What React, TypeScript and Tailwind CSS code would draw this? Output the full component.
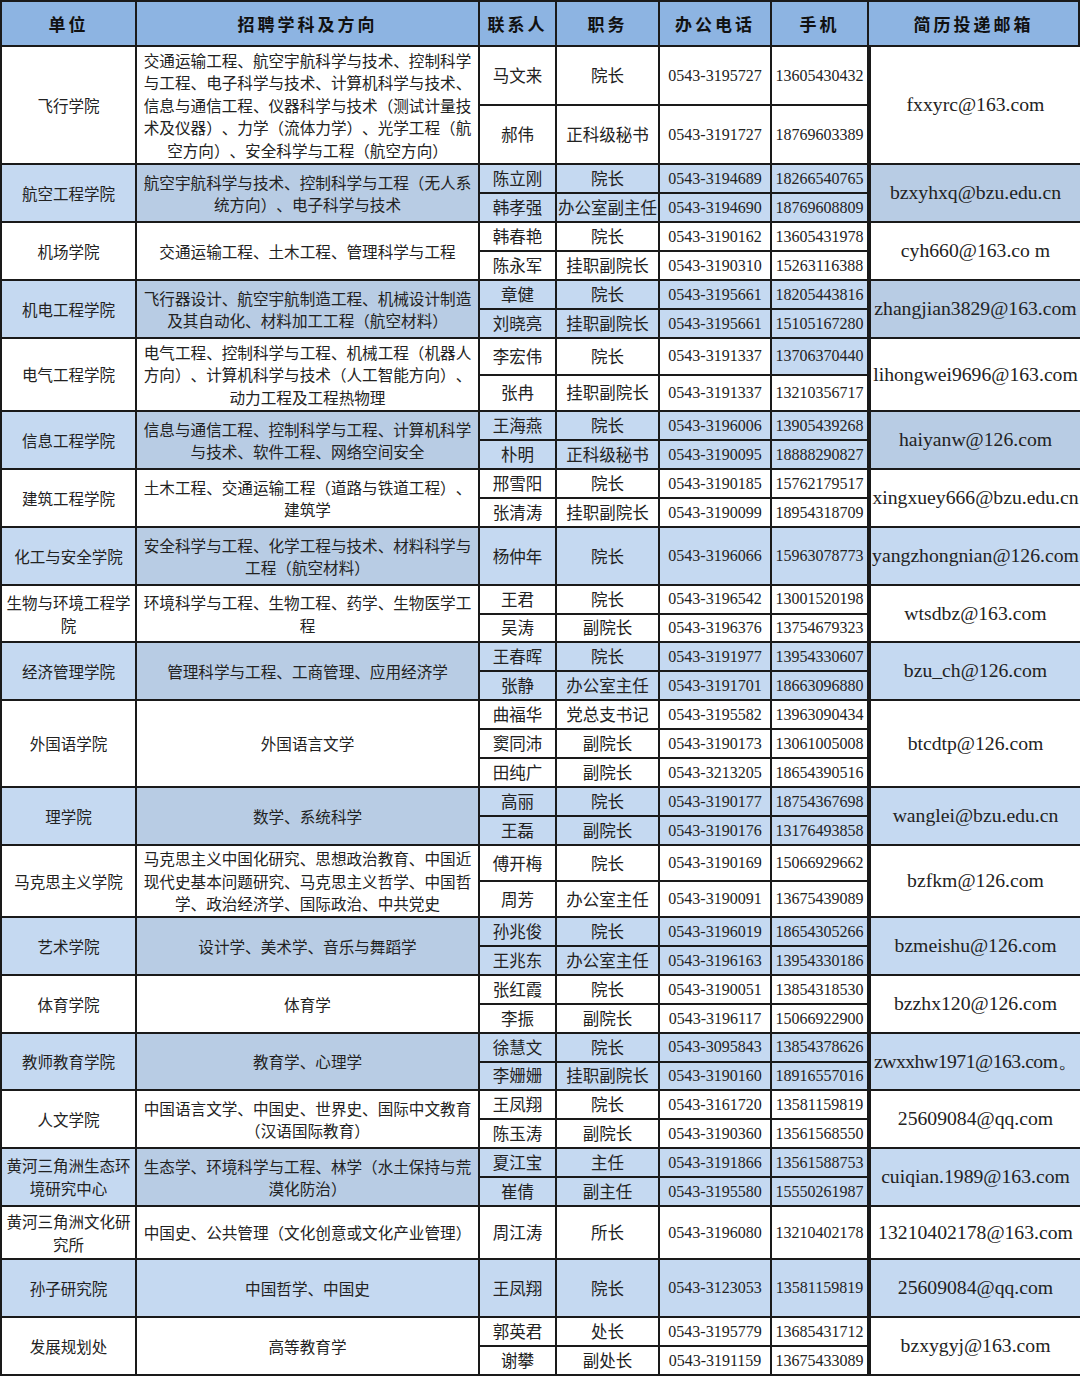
type Person = [string, string, string, string, boolean?];

type Group = {
  unit: string[];
  major: string[];
  email: string;
  h: string;
  shade?: boolean;
  majorLight?: boolean;
  emailDark?: boolean;
  tight?: boolean;
  people: Person[];
};

const groups: Group[] = [
  {
    unit: ["飞行学院"],
    major: [
      "交通运输工程、航空宇航科学与技术、控制科学",
      "与工程、电子科学与技术、计算机科学与技术、",
      "信息与通信工程、仪器科学与技术（测试计量技",
      "术及仪器）、力学（流体力学）、光学工程（航",
      "空方向）、安全科学与工程（航空方向）",
    ],
    email: "fxxyrc@163.com",
    h: "h-[116px]",
    people: [
      ["马文来", "院长", "0543-3195727", "13605430432"],
      ["郝伟", "正科级秘书", "0543-3191727", "18769603389"],
    ],
  },
  {
    unit: ["航空工程学院"],
    major: ["航空宇航科学与技术、控制科学与工程（无人系", "统方向）、电子科学与技术"],
    email: "bzxyhxq@bzu.edu.cn",
    h: "h-[56px]",
    shade: true,
    emailDark: true,
    people: [
      ["陈立刚", "院长", "0543-3194689", "18266540765"],
      ["韩孝强", "办公室副主任", "0543-3194690", "18769608809"],
    ],
  },
  {
    unit: ["机场学院"],
    major: ["交通运输工程、土木工程、管理科学与工程"],
    email: "cyh660@163.co m",
    h: "h-[56px]",
    people: [
      ["韩春艳", "院长", "0543-3190162", "13605431978"],
      ["陈永军", "挂职副院长", "0543-3190310", "15263116388"],
    ],
  },
  {
    unit: ["机电工程学院"],
    major: ["飞行器设计、航空宇航制造工程、机械设计制造", "及其自动化、材料加工工程（航空材料）"],
    email: "zhangjian3829@163.com",
    h: "h-[56px]",
    shade: true,
    emailDark: true,
    people: [
      ["章健", "院长", "0543-3195661", "18205443816"],
      ["刘晓亮", "挂职副院长", "0543-3195661", "15105167280"],
    ],
  },
  {
    unit: ["电气工程学院"],
    major: [
      "电气工程、控制科学与工程、机械工程（机器人",
      "方向）、计算机科学与技术（人工智能方向）、",
      "动力工程及工程热物理",
    ],
    email: "lihongwei9696@163.com",
    h: "h-[71px]",
    people: [
      ["李宏伟", "院长", "0543-3191337", "13706370440", true],
      ["张冉", "挂职副院长", "0543-3191337", "13210356717"],
    ],
  },
  {
    unit: ["信息工程学院"],
    major: ["信息与通信工程、控制科学与工程、计算机科学", "与技术、软件工程、网络空间安全"],
    email: "haiyanw@126.com",
    h: "h-[56px]",
    shade: true,
    emailDark: true,
    people: [
      ["王海燕", "院长", "0543-3196006", "13905439268"],
      ["朴明", "正科级秘书", "0543-3190095", "18888290827"],
    ],
  },
  {
    unit: ["建筑工程学院"],
    major: ["土木工程、交通运输工程（道路与铁道工程）、", "建筑学"],
    email: "xingxuey666@bzu.edu.cn",
    h: "h-[56px]",
    people: [
      ["邢雪阳", "院长", "0543-3190185", "15762179517"],
      ["张清涛", "挂职副院长", "0543-3190099", "18954318709"],
    ],
  },
  {
    unit: ["化工与安全学院"],
    major: ["安全科学与工程、化学工程与技术、材料科学与", "工程（航空材料）"],
    email: "yangzhongnian@126.com",
    h: "h-[56px]",
    shade: true,
    people: [["杨仲年", "院长", "0543-3196066", "15963078773"]],
  },
  {
    unit: ["生物与环境工程学", "院"],
    major: ["环境科学与工程、生物工程、药学、生物医学工", "程"],
    email: "wtsdbz@163.com",
    h: "h-[55px]",
    people: [
      ["王君", "院长", "0543-3196542", "13001520198"],
      ["吴涛", "副院长", "0543-3196376", "13754679323"],
    ],
  },
  {
    unit: ["经济管理学院"],
    major: ["管理科学与工程、工商管理、应用经济学"],
    email: "bzu_ch@126.com",
    h: "h-[56px]",
    shade: true,
    people: [
      ["王春晖", "院长", "0543-3191977", "13954330607"],
      ["张静", "办公室主任", "0543-3191701", "18663096880"],
    ],
  },
  {
    unit: ["外国语学院"],
    major: ["外国语言文学"],
    email: "btcdtp@126.com",
    h: "h-[85px]",
    people: [
      ["曲福华", "党总支书记", "0543-3195582", "13963090434"],
      ["窦同沛", "副院长", "0543-3190173", "13061005008"],
      ["田纯广", "副院长", "0543-3213205", "18654390516"],
    ],
  },
  {
    unit: ["理学院"],
    major: ["数学、系统科学"],
    email: "wanglei@bzu.edu.cn",
    h: "h-[56px]",
    shade: true,
    people: [
      ["高丽", "院长", "0543-3190177", "18754367698"],
      ["王磊", "副院长", "0543-3190176", "13176493858"],
    ],
  },
  {
    unit: ["马克思主义学院"],
    major: [
      "马克思主义中国化研究、思想政治教育、中国近",
      "现代史基本问题研究、马克思主义哲学、中国哲",
      "学、政治经济学、国际政治、中共党史",
    ],
    email: "bzfkm@126.com",
    h: "h-[70px]",
    people: [
      ["傅开梅", "院长", "0543-3190169", "15066929662"],
      ["周芳", "办公室主任", "0543-3190091", "13675439089"],
    ],
  },
  {
    unit: ["艺术学院"],
    major: ["设计学、美术学、音乐与舞蹈学"],
    email: "bzmeishu@126.com",
    h: "h-[56px]",
    shade: true,
    people: [
      ["孙兆俊", "院长", "0543-3196019", "18654305266"],
      ["王兆东", "办公室主任", "0543-3196163", "13954330186"],
    ],
  },
  {
    unit: ["体育学院"],
    major: ["体育学"],
    email: "bzzhx120@126.com",
    h: "h-[56px]",
    people: [
      ["张红霞", "院长", "0543-3190051", "13854318530"],
      ["李振", "副院长", "0543-3196117", "15066922900"],
    ],
  },
  {
    unit: ["教师教育学院"],
    major: ["教育学、心理学"],
    email: "zwxxhw1971@163.com。",
    h: "h-[55px]",
    shade: true,
    tight: true,
    people: [
      ["徐慧文", "院长", "0543-3095843", "13854378626"],
      ["李姗姗", "挂职副院长", "0543-3190160", "18916557016"],
    ],
  },
  {
    unit: ["人文学院"],
    major: ["中国语言文学、中国史、世界史、国际中文教育", "（汉语国际教育）"],
    email: "25609084@qq.com",
    h: "h-[56px]",
    people: [
      ["王凤翔", "院长", "0543-3161720", "13581159819"],
      ["陈玉涛", "副院长", "0543-3190360", "13561568550"],
    ],
  },
  {
    unit: ["黄河三角洲生态环", "境研究中心"],
    major: ["生态学、环境科学与工程、林学（水土保持与荒", "漠化防治）"],
    email: "cuiqian.1989@163.com",
    h: "h-[56px]",
    shade: true,
    people: [
      ["夏江宝", "主任", "0543-3191866", "13561588753"],
      ["崔倩", "副主任", "0543-3195580", "15550261987"],
    ],
  },
  {
    unit: ["黄河三角洲文化研", "究所"],
    major: ["中国史、公共管理（文化创意或文化产业管理）"],
    email: "13210402178@163.com",
    h: "h-[51px]",
    people: [["周江涛", "所长", "0543-3196080", "13210402178"]],
  },
  {
    unit: ["孙子研究院"],
    major: ["中国哲学、中国史"],
    email: "25609084@qq.com",
    h: "h-[56px]",
    shade: true,
    majorLight: true,
    people: [["王凤翔", "院长", "0543-3123053", "13581159819"]],
  },
  {
    unit: ["发展规划处"],
    major: ["高等教育学"],
    email: "bzxygyj@163.com",
    h: "h-[56px]",
    people: [
      ["郭英君", "处长", "0543-3195779", "13685431712"],
      ["谢攀", "副处长", "0543-3191159", "13675433089"],
    ],
  },
];

const LIGHT = "bg-[#c5d9f1]";
const DARK = "bg-[#b8cce4]";
const WHITE = "bg-white";

const cjk = "font-['Noto_Sans_CJK_SC',sans-serif]";
const serif = "font-['Liberation_Serif',serif]";

function HeadCell({ w, children }: { w: string; children: string }) {
  return (
    <div className={`${w} shrink-0 flex items-center justify-center bg-[#8db4e2] text-[17px] font-bold tracking-[3px] text-[#111]`}>
      {children}
    </div>
  );
}

function GroupRow({ g }: { g: Group }) {
  const unitBg = g.shade ? LIGHT : WHITE;
  const majorBg = g.shade ? (g.majorLight ? LIGHT : DARK) : WHITE;
  const peopleBg = g.shade ? LIGHT : WHITE;
  const emailBg = g.shade ? (g.emailDark ? DARK : LIGHT) : WHITE;

  return (
    <div className={`flex gap-[2px] ${g.h}`}>
      <div className={`w-[133px] shrink-0 flex flex-col items-center justify-center text-[15.5px] leading-[23px] ${unitBg}`}>
        {g.unit.map((line) => (
          <div key={line} className="whitespace-nowrap">{line}</div>
        ))}
      </div>
      <div className={`w-[341px] shrink-0 flex flex-col items-center justify-center text-[15.6px] leading-[22.5px] ${majorBg}`}>
        {g.major.map((line) => (
          <div key={line} className="whitespace-nowrap">{line}</div>
        ))}
      </div>
      <div className="w-[389px] shrink-0 flex flex-col gap-[2px]">
        {g.people.map((p, i) => (
          <div key={i} className="flex-1 basis-0 flex gap-[2px]">
            <div className={`w-[75px] shrink-0 flex items-center justify-center text-[16.5px] whitespace-nowrap ${peopleBg}`}>{p[0]}</div>
            <div className={`w-[101px] shrink-0 flex items-center justify-center text-[16.5px] whitespace-nowrap ${peopleBg}`}>{p[1]}</div>
            <div className={`w-[110px] shrink-0 flex items-center justify-center text-[16px] ${serif} ${peopleBg}`}>{p[2]}</div>
            <div className={`w-[95px] shrink-0 flex items-center justify-center text-[16px] ${serif} ${p[4] ? LIGHT : peopleBg}`}>{p[3]}</div>
          </div>
        ))}
      </div>
      <div className={`w-[209px] shrink-0 flex items-center overflow-hidden ${emailBg}`}>
        <div className={`w-full text-center whitespace-nowrap text-[19.7px] ${serif} ${g.tight ? "tracking-[-0.5px]" : ""}`}>{g.email}</div>
      </div>
    </div>
  );
}

export default function App() {
  return (
    <div className={`w-[1080px] h-[1376px] bg-[#1a1a1a] p-[2px] flex flex-col gap-[2px] text-[#222] [text-spacing-trim:space-all] ${cjk}`}>
      <div className="flex gap-[2px] h-[43px]">
        <HeadCell w="w-[133px]">单位</HeadCell>
        <HeadCell w="w-[341px]">招聘学科及方向</HeadCell>
        <HeadCell w="w-[75px]">联系人</HeadCell>
        <HeadCell w="w-[101px]">职务</HeadCell>
        <HeadCell w="w-[110px]">办公电话</HeadCell>
        <HeadCell w="w-[95px]">手机</HeadCell>
        <HeadCell w="w-[209px]">简历投递邮箱</HeadCell>
      </div>
      {groups.map((g) => (
        <GroupRow key={g.unit.join("") + g.email} g={g} />
      ))}
    </div>
  );
}
